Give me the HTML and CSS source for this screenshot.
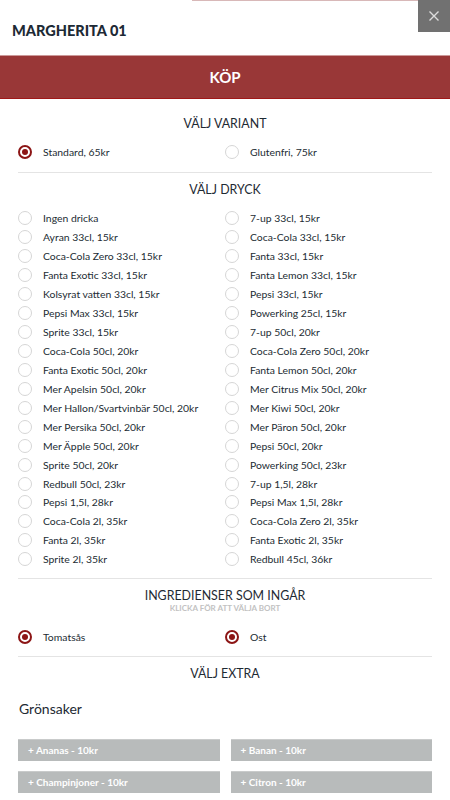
FILE: index.html
```html
<!DOCTYPE html>
<html lang="sv">
<head>
<meta charset="utf-8">
<link rel="stylesheet" href="styles.css">
</head>
<body>
<div class="modal">
  <div class="top-line"></div>
  <button class="close" aria-label="Stäng">
    <svg width="12" height="12" viewBox="0 0 12 12"><path d="M1.5 1.5 L10.5 10.5 M10.5 1.5 L1.5 10.5" stroke="#dcdcdc" stroke-width="1.4" fill="none"/></svg>
  </button>
  <header class="header"><h1 class="title">MARGHERITA 01</h1></header>
  <div class="buy">KÖP</div>

  <section class="section first">
    <h2 class="heading">VÄLJ VARIANT</h2>
    <div class="options">
      <label class="opt"><span class="radio on"></span>Standard, 65kr</label>
      <label class="opt"><span class="radio"></span>Glutenfri, 75kr</label>
    </div>
  </section>

  <section class="section tight">
    <h2 class="heading">VÄLJ DRYCK</h2>
    <div class="options">
      <label class="opt"><span class="radio"></span>Ingen dricka</label>
      <label class="opt"><span class="radio"></span>7-up 33cl, 15kr</label>
      <label class="opt"><span class="radio"></span>Ayran 33cl, 15kr</label>
      <label class="opt"><span class="radio"></span>Coca-Cola 33cl, 15kr</label>
      <label class="opt"><span class="radio"></span>Coca-Cola Zero 33cl, 15kr</label>
      <label class="opt"><span class="radio"></span>Fanta 33cl, 15kr</label>
      <label class="opt"><span class="radio"></span>Fanta Exotic 33cl, 15kr</label>
      <label class="opt"><span class="radio"></span>Fanta Lemon 33cl, 15kr</label>
      <label class="opt"><span class="radio"></span>Kolsyrat vatten 33cl, 15kr</label>
      <label class="opt"><span class="radio"></span>Pepsi 33cl, 15kr</label>
      <label class="opt"><span class="radio"></span>Pepsi Max 33cl, 15kr</label>
      <label class="opt"><span class="radio"></span>Powerking 25cl, 15kr</label>
      <label class="opt"><span class="radio"></span>Sprite 33cl, 15kr</label>
      <label class="opt"><span class="radio"></span>7-up 50cl, 20kr</label>
      <label class="opt"><span class="radio"></span>Coca-Cola 50cl, 20kr</label>
      <label class="opt"><span class="radio"></span>Coca-Cola Zero 50cl, 20kr</label>
      <label class="opt"><span class="radio"></span>Fanta Exotic 50cl, 20kr</label>
      <label class="opt"><span class="radio"></span>Fanta Lemon 50cl, 20kr</label>
      <label class="opt"><span class="radio"></span>Mer Apelsin 50cl, 20kr</label>
      <label class="opt"><span class="radio"></span>Mer Citrus Mix 50cl, 20kr</label>
      <label class="opt"><span class="radio"></span>Mer Hallon/Svartvinbär 50cl, 20kr</label>
      <label class="opt"><span class="radio"></span>Mer Kiwi 50cl, 20kr</label>
      <label class="opt"><span class="radio"></span>Mer Persika 50cl, 20kr</label>
      <label class="opt"><span class="radio"></span>Mer Päron 50cl, 20kr</label>
      <label class="opt"><span class="radio"></span>Mer Äpple 50cl, 20kr</label>
      <label class="opt"><span class="radio"></span>Pepsi 50cl, 20kr</label>
      <label class="opt"><span class="radio"></span>Sprite 50cl, 20kr</label>
      <label class="opt"><span class="radio"></span>Powerking 50cl, 23kr</label>
      <label class="opt"><span class="radio"></span>Redbull 50cl, 23kr</label>
      <label class="opt"><span class="radio"></span>7-up 1,5l, 28kr</label>
      <label class="opt"><span class="radio"></span>Pepsi 1,5l, 28kr</label>
      <label class="opt"><span class="radio"></span>Pepsi Max 1,5l, 28kr</label>
      <label class="opt"><span class="radio"></span>Coca-Cola 2l, 35kr</label>
      <label class="opt"><span class="radio"></span>Coca-Cola Zero 2l, 35kr</label>
      <label class="opt"><span class="radio"></span>Fanta 2l, 35kr</label>
      <label class="opt"><span class="radio"></span>Fanta Exotic 2l, 35kr</label>
      <label class="opt"><span class="radio"></span>Sprite 2l, 35kr</label>
      <label class="opt"><span class="radio"></span>Redbull 45cl, 36kr</label>
    </div>
  </section>

  <section class="section tight">
    <h2 class="heading">INGREDIENSER SOM INGÅR</h2>
    <p class="sub">KLICKA FÖR ATT VÄLJA BORT</p>
    <div class="options ingr">
      <label class="opt"><span class="radio on"></span>Tomatsås</label>
      <label class="opt"><span class="radio on"></span>Ost</label>
    </div>
  </section>

  <section class="section last">
    <h2 class="heading">VÄLJ EXTRA</h2>
    <h3 class="group">Grönsaker</h3>
    <div class="extras">
      <button class="extra">+ Ananas - 10kr</button>
      <button class="extra">+ Banan - 10kr</button>
      <button class="extra">+ Champinjoner - 10kr</button>
      <button class="extra">+ Citron - 10kr</button>
    </div>
  </section>
</div>
</body>
</html>
```

FILE: styles.css
```css
* { box-sizing: border-box; }
html, body { margin: 0; padding: 0; background: #fff; }
body { font-family: Lato, "Noto Sans", sans-serif; color: #1e2a33; overflow: hidden; }

.modal { position: relative; width: 450px; }

.top-line {
  position: absolute; top: 0; left: 192px; width: 226px; height: 1px;
  background: #d8b8b8;
}
.close {
  position: absolute; top: 0; right: 0; width: 32px; height: 32px;
  background: #717171; border: 0; padding: 0;
  display: flex; align-items: center; justify-content: center;
}

.header { height: 55px; display: flex; align-items: center; padding: 5px 12px 0; }
.title { margin: 0; font-size: 14.5px; font-weight: 900; color: #1d2a35; }

.buy {
  height: 44px; background: #993737;
  border-top: 1px solid #c99; border-bottom: 1px solid #a01818;
  color: #fff; font-weight: 700; font-size: 15px;
  display: flex; align-items: center; justify-content: center;
}

.section { margin: 0 18px; border-bottom: 1px solid #e4e4e4; padding: 7px 0 10px; }
.section.first { padding-top: 15px; }
.section.tight { padding-bottom: 9px; }
.section.last { border-bottom: 0; }

.heading {
  margin: 0; font-size: 12.4px; font-weight: 400; line-height: 20px;
  text-align: center; color: #1e2a33;
}
.sub {
  margin: -3px 0 0; font-size: 8px; line-height: 10px; text-align: center;
  color: #c2c2c2; font-weight: 700;
}

.options { display: grid; grid-template-columns: 1fr 1fr; margin-top: 9px; }
.options.ingr { margin-top: 15px; }
.opt {
  height: 18.95px; display: flex; align-items: center; gap: 11px;
  font-size: 10.4px; color: #222c33;
}
.radio {
  flex: none; width: 14px; height: 14px; border-radius: 50%;
  border: 1px solid #d6d6d6; background: #fff;
  display: flex; align-items: center; justify-content: center;
}
.radio.on { border: 2px solid #8c1515; }
.radio.on::after { content: ""; width: 6px; height: 6px; border-radius: 50%; background: #8c1515; }

.group { margin: 15px 0 0 1px; font-size: 14px; font-weight: 400; line-height: 20px; color: #1e2a33; }

.extras { display: grid; grid-template-columns: 1fr 1fr; gap: 10px 11px; margin-top: 20px; }
.extra {
  height: 22px; background: #b8bbbb; border: 0; border-top: 1px solid #c9cbcb;
  color: #fff; font-family: Lato, sans-serif; font-weight: 700; font-size: 10px;
  text-align: left; padding: 0 10px;
}
```
